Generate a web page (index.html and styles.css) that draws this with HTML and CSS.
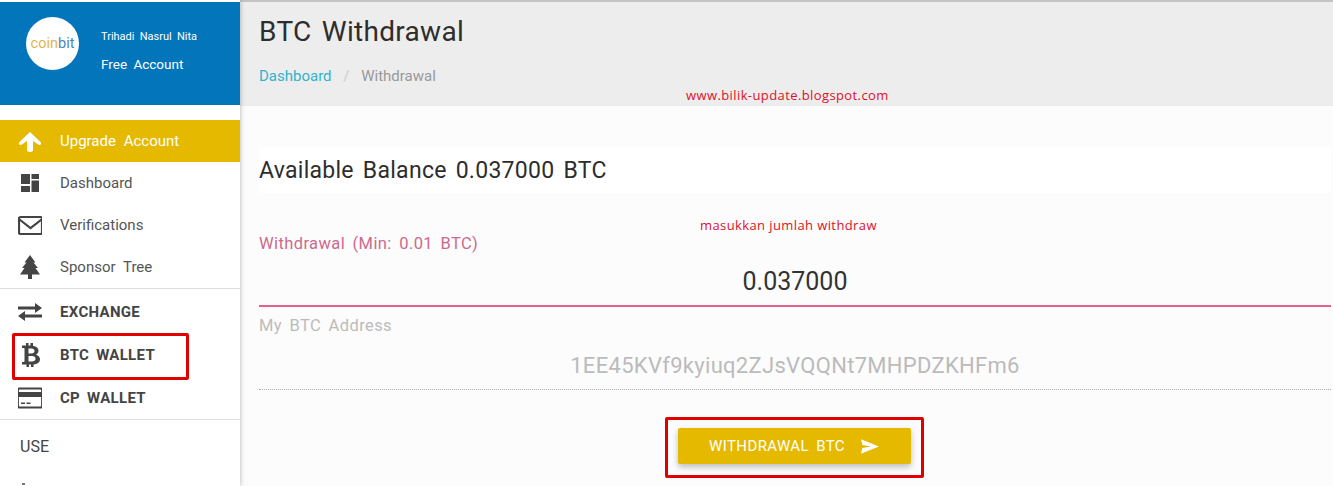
FILE: index.html
```html
<!DOCTYPE html>
<html lang="en">
<head>
  <meta charset="UTF-8">
  <title>BTC Withdrawal</title>
  <link rel="stylesheet" href="styles.css">
</head>
<body>

<div class="page">
  <aside class="sidebar">
    <div class="user-box">
      <div class="logo"><span class="logo-coin">coin</span><span class="logo-bit">bit</span></div>
      <div class="user-info">
        <div class="user-name">Trihadi Nasrul Nita</div>
        <div class="user-plan">Free Account</div>
      </div>
    </div>

    <a class="menu-item upgrade">
      <svg class="icon" viewBox="0 0 24 24"><path d="M12 3 L23 13.5 Q23.5 16 21 16 L15 12 V22 Q12 24 9 22 V12 L3 16 Q.5 16 1 13.5 Z" fill="#fff"/></svg>
      Upgrade Account
    </a>
    <a class="menu-item">
      <svg class="icon" viewBox="0 0 24 24"><path d="M3 3h9v10H3zM13.500 3H21v5h-7.500zM13.500 9.500H21V21h-7.500zM3 15h9v6H3z" fill="#444"/></svg>
      Dashboard
    </a>
    <a class="menu-item">
      <svg class="icon" viewBox="0 0 24 24"><rect x="1" y="4" width="23" height="17" rx="1.5" fill="none" stroke="#444" stroke-width="2.200"/><path d="M1.500 6.500 L12.500 15 L23.500 6.500" fill="none" stroke="#444" stroke-width="2.200"/></svg>
      Verifications
    </a>
    <a class="menu-item">
      <svg class="icon" viewBox="0 0 24 24"><path d="M12 0 L17.500 7.500 H15.500 L20 13 H17.500 L22 19.500 H14 V24 H10 V19.500 H2 L6.500 13 H4 L8.500 7.500 H6.500 Z" fill="#444"/></svg>
      Sponsor Tree
    </a>
    <div class="divider"></div>
    <a class="menu-item strong">
      <svg class="icon" viewBox="0 0 24 24"><path d="M0 6.500h17V3l7 5-7 5V9.500H0zM24 14.500H7V11l-7 5 7 5v-3.500h17z" fill="#444"/></svg>
      EXCHANGE
    </a>
    <a class="menu-item strong">
      <svg class="icon" viewBox="0 0 24 24"><path d="M4 2.500h4V0h2.500v2.500h2V0H15v2.800c3.500.6 5.500 2.400 5.500 5 0 1.800-1 3.200-2.500 3.900 2.500.7 4 2.300 4 4.600 0 3-2.400 4.900-6.500 5.200V24h-2.500v-2.500h-2V24H8.500v-2.500H4v-2.500h1.500c.6 0 1-.4 1-1V6c0-.6-.4-1-1-1H4zM10.500 5.500v5h3c1.800 0 3-1 3-2.500s-1.200-2.500-3-2.500zM10.500 13v5.500h3.500c2.200 0 3.500-1 3.500-2.800S16.200 13 14 13z" fill="#444" fill-rule="evenodd"/></svg>
      BTC WALLET
    </a>
    <a class="menu-item strong">
      <svg class="icon" viewBox="0 0 24 24"><rect x="-.2" y="2.500" width="24.400" height="19" rx="2" fill="none" stroke="#444" stroke-width="2.200"/><path d="M0 6h24v5H0zM3 16.500h4v1.500H3zM8.500 16.500h4v1.500h-4z" fill="#444"/></svg>
      CP WALLET
    </a>
    <div class="divider after-wallets"></div>
    <div class="menu-title">USE</div>
    <div class="menu-dot"></div>

    <div class="mark mark-wallet"></div>
  </aside>

  <main class="content">
    <header class="page-head">
      <h1>BTC Withdrawal</h1>
      <div class="breadcrumb">
        <span class="crumb-link">Dashboard</span>
        <span class="crumb-sep">/</span>
        <span>Withdrawal</span>
      </div>
    </header>

    <div class="balance">Available Balance 0.037000 BTC</div>

    <form class="withdraw-form">
      <label class="label-active">Withdrawal (Min: 0.01 BTC)</label>
      <div class="value-active">0.037000</div>
      <label class="label-muted">My BTC Address</label>
      <div class="value-muted">1EE45KVf9kyiuq2ZJsVQQNt7MHPDZKHFm6</div>
      <div class="actions">
        <div class="btn-mark">
          <button type="button" class="btn-send">
            WITHDRAWAL BTC
            <svg class="send-icon" viewBox="0 0 20 16"><path d="M0 0 L20 8 L0 16 L1.500 9.800 L11 8 L1.500 6.200 Z" fill="#fff"/></svg>
          </button>
        </div>
      </div>
    </form>

    <div class="note note-site">www.bilik-update.blogspot.com</div>
    <div class="note note-amount">masukkan jumlah withdraw</div>
  </main>
</div>

</body>
</html>
```

FILE: styles.css
```css
body {
  margin: 0;
  font-family: 'Roboto', 'Liberation Sans', sans-serif;
  word-spacing: 3px;
  background-color: #fcfcfc;
  overflow: hidden;
}

.page {
  display: flex;
  height: 486px;
  overflow: hidden;
}

.sidebar {
  position: relative;
  flex: 0 0 240px;
  background: white;
  padding-top: 2px;
  box-shadow: 0 0 5px rgba(0,0,0,0.3);
  z-index: 2;
  box-sizing: border-box;
}

.user-box {
  display: flex;
  height: 103px;
  background-color: #0275bb;
  padding: 15px 0 0 26px;
  box-sizing: border-box;
  margin-bottom: 15px;
  color: white;
}

.logo {
  width: 53px;
  height: 53px;
  border-radius: 50%;
  background: white;
  display: flex;
  align-items: center;
  justify-content: center;
  font-size: 14.5px;
  word-spacing: 0;
}

.logo-coin {
  color: #e3b44f;
}

.logo-bit {
  color: #4d86b8;
}

.user-info {
  margin-left: 22px;
}

.user-name {
  font-size: 11px;
  margin-top: 13px;
  line-height: 14px;
  word-spacing: 2.5px;
}

.user-plan {
  font-size: 13.500px;
  margin-top: 12px;
  line-height: 16px;
}

.menu-item {
  display: flex;
  align-items: center;
  height: 42px;
  padding-left: 18px;
  font-size: 15px;
  color: #555;
  word-spacing: 4px;
}

.menu-item.strong {
  height: 43px;
  padding-top: 2px;
  box-sizing: border-box;
  font-weight: bold;
  color: #444;
  word-spacing: 3px;
  letter-spacing: 0.3px;
}

.upgrade {
  background-color: #e5b900;
  color: white;
}

.icon {
  width: 24px;
  height: 24px;
  margin-right: 18px;
  flex: none;
}

.divider {
  border-top: 1px solid #ddd;
}

.after-wallets {
  margin-top: 1px;
}

.menu-title {
  font-size: 16px;
  color: #444;
  padding: 17px 0 0 20px;
  line-height: 19px;
}

.menu-dot {
  width: 3px;
  height: 2px;
  background: #777;
  margin: 27px 0 0 22px;
}

.mark {
  position: absolute;
  border: 3px solid #e00000;
  border-radius: 2px;
  box-sizing: border-box;
}

.mark-wallet {
  left: 12px;
  top: 333px;
  width: 177px;
  height: 47px;
}

.content {
  position: relative;
  flex: 1;
  min-width: 0;
  border-top: 2px solid #c4c4c4;
}

.page-head {
  height: 104px;
  background-color: #ededed;
  padding: 13px 0 0 19px;
  box-sizing: border-box;
}

h1 {
  margin: 0;
  font-size: 28px;
  font-weight: 400;
  line-height: 34px;
  letter-spacing: 0.3px;
  color: #2d2d2d;
}

.breadcrumb {
  margin-top: 18px;
  font-size: 15px;
  line-height: 18px;
  color: #999;
}

.crumb-link {
  color: #2fb4cc;
}

.crumb-sep {
  color: #ccc;
  margin: 0 5px;
}

.balance {
  margin: 41px 2px 0 19px;
  height: 46px;
  line-height: 48px;
  background: white;
  font-size: 23px;
  letter-spacing: 0.28px;
  color: #2d2d2d;
}

.withdraw-form {
  margin: 0 2px 0 19px;
  padding-top: 42px;
}

label {
  display: block;
  font-size: 16.5px;
  line-height: 18px;
  letter-spacing: 0.4px;
}

.label-active {
  color: #cc6a8c;
}

.value-active {
  margin-top: 8px;
  height: 46px;
  text-align: center;
  font-size: 25px;
  line-height: 42px;
  color: #333;
  border-bottom: 2px solid #e0628a;
  box-sizing: border-box;
}

.label-muted {
  color: #bbb;
  margin-top: 10px;
}

.value-muted {
  margin-top: 12px;
  height: 43px;
  text-align: center;
  font-size: 22px;
  line-height: 38px;
  letter-spacing: 0.3px;
  color: #bbb;
  border-bottom: 1px dotted #aaa;
  box-sizing: border-box;
  word-spacing: 0;
}

.actions {
  display: flex;
  justify-content: center;
  margin-top: 27px;
  padding-right: 2px;
}

.btn-mark {
  border: 3px solid #e00000;
  border-radius: 2px;
  padding: 8px 10px 11px;
}

.btn-send {
  display: flex;
  align-items: center;
  justify-content: center;
  width: 233px;
  height: 36px;
  background-color: #e5b900;
  color: white;
  border: none;
  border-radius: 2px;
  font-family: inherit;
  font-size: 15px;
  letter-spacing: 0.4px;
  word-spacing: 3px;
  box-shadow: 0 3px 6px rgba(0,0,0,0.25);
}

.send-icon {
  width: 18px;
  height: 15px;
  margin-left: 16px;
}

.note {
  position: absolute;
  color: #e0102a;
  font-family: 'Open Sans', sans-serif;
  font-size: 13px;
  line-height: 16px;
  letter-spacing: 0.4px;
  word-spacing: 0;
  white-space: nowrap;
}

.note-site {
  left: 446px;
  top: 85px;
}

.note-amount {
  left: 460px;
  top: 215px;
}
```
